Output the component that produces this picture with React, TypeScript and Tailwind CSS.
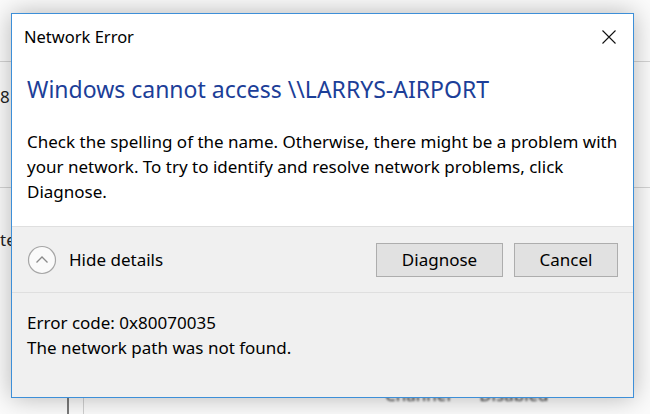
import React from "react";

export default function App() {
  const font = { fontFamily: '"Segoe UI", "Noto Sans", sans-serif' };
  return (
    <div className="relative w-[650px] h-[414px] overflow-hidden bg-[#fbfbfb]" style={font}>
      {/* background window behind */}
      <div className="absolute left-0 right-0 top-[61px] h-px bg-[#d4d4d4]" />
      <div className="absolute left-0 right-0 top-[187px] h-px bg-[#d4d4d4]" />
      <div className="absolute left-[0px] top-[88px] text-[17px] text-[#222] leading-none">8</div>
      <div className="absolute left-[0px] top-[231px] text-[17px] text-[#222] leading-none">te</div>
      <div className="absolute left-[67px] top-[390px] w-[2px] h-[30px] bg-[#7a7a7a]" />
      <div className="absolute left-[83px] top-[390px] w-px h-[30px] bg-[#d0d0d0]" />
      <div className="absolute left-[385px] top-[386px] text-[17px] text-[#333] leading-none blur-[1px]">
        Channel <span className="ml-6">Disabled</span>
      </div>

      {/* dialog */}
      <div className="absolute left-[11px] top-[13px] w-[623px] h-[385px] border border-[#3d8fd8] bg-white flex flex-col shadow-[0_0_24px_rgba(0,0,0,0.28)]">
        <div className="bg-white flex flex-col h-[212px]">
          <div className="flex items-center justify-between h-[46px] pl-[12px] pr-[15px]">
            <span className="text-[16.5px] text-black">Network Error</span>
            <svg width="16" height="16" viewBox="0 0 16 16" className="mr-[1px]">
              <path d="M1.5 1.5 L14.5 14.5 M14.5 1.5 L1.5 14.5" stroke="#111" strokeWidth="1.1" fill="none" />
            </svg>
          </div>
          <div className="pl-[15px] pt-[14px] text-[23px] leading-[31px] text-[#1c3e98]">
            Windows cannot access \\LARRYS-AIRPORT
          </div>
          <div className="pl-[15px] pr-[4px] pt-[24px] text-[17px] leading-[25px] text-black">
            Check the spelling of the name. Otherwise, there might be a problem with your network. To try to identify and resolve network problems, click Diagnose.
          </div>
        </div>
        <div className="h-[66px] bg-[#f0f0f0] border-t border-[#dfdfdf] flex items-center pl-[15px] pr-[15px]">
          <svg width="30" height="30" viewBox="0 0 30 30">
            <circle cx="15" cy="15" r="13.5" fill="#fafafa" stroke="#a6a6a6" strokeWidth="1.2" />
            <path d="M9.5 17.5 L15 12 L20.5 17.5" stroke="#8a8a8a" strokeWidth="1.3" fill="none" />
          </svg>
          <span className="ml-[12px] text-[17px] text-black">Hide details</span>
          <div className="ml-auto flex gap-[11px]">
            <button className="w-[127px] h-[34px] bg-[#e1e1e1] border border-[#adadad] text-[17px] text-black">Diagnose</button>
            <button className="w-[104px] h-[34px] bg-[#e1e1e1] border border-[#adadad] text-[17px] text-black">Cancel</button>
          </div>
        </div>
        <div className="flex-1 bg-[#f0f0f0] border-t border-[#dfdfdf] pl-[15px] pt-[17px] text-[17px] leading-[25px] text-black">
          <div>Error code: 0x80070035</div>
          <div>The network path was not found.</div>
        </div>
      </div>
    </div>
  );
}
